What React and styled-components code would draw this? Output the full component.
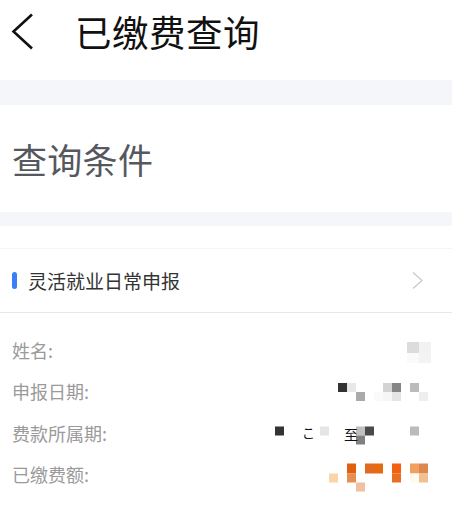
import React from "react";
import styled, { createGlobalStyle } from "styled-components";

const Global = createGlobalStyle`
  html, body { margin: 0; padding: 0; background: #ffffff; }
  body { font-family: "Noto Sans CJK SC", "Noto Sans", sans-serif; }
`;

const Page = styled.div`
  width: 452px;
  display: flex;
  flex-direction: column;
  background: #fff;
`;

const Header = styled.header`
  height: 80px;
  display: flex;
  align-items: flex-start;
  padding: 12px 0 0 11px;
  box-sizing: border-box;
  gap: 40px;
`;

const Title = styled.h1`
  margin: 0;
  font-size: 36.5px;
  line-height: 40px;
  font-weight: 400;
  color: #111;
  letter-spacing: 0.5px;
`;

const Band = styled.div`
  height: ${(p) => p.$h}px;
  background: #f5f6f9;
`;

const Section = styled.div`
  height: 107px;
  display: flex;
  align-items: center;
  padding-left: 12px;
  font-size: 35px;
  color: #55585e;
  letter-spacing: 0.3px;
`;

const Card = styled.div`
  margin-top: 22px;
  border-top: 1px solid #f4f4f4;
`;

const TypeRow = styled.div`
  height: 63px;
  display: flex;
  align-items: center;
  padding: 0 28px 0 12px;
  border-bottom: 1px solid #e8e8e8;
`;

const Mark = styled.span`
  width: 5px;
  height: 17px;
  border-radius: 3px;
  background: #3a7ff6;
  margin-right: 11px;
`;

const TypeText = styled.span`
  flex: 1;
  font-size: 19px;
  color: #333;
`;

const List = styled.div`
  padding-top: 16px;
  display: flex;
  flex-direction: column;
`;

const InfoRow = styled.div`
  height: 41.5px;
  display: flex;
  align-items: center;
  padding: 0 20px 0 12px;
`;

const Label = styled.span`
  flex: 1;
  font-size: 18px;
  color: #9a9a9a;
`;

const Mosaic = styled.svg`
  display: block;
  flex: none;
`;

const X0 = 262;

function Value({ cells, texts = [] }) {
  return (
    <Mosaic width={170} height={41.5} viewBox="0 0 170 41.5">
      {cells.map(([x, y, w, h, c], i) => (
        <rect key={i} x={x - X0} y={y} width={w} height={h} fill={c} />
      ))}
      {texts.map(([x, y, s, t], i) => (
        <text
          key={"t" + i}
          x={x - X0}
          y={y}
          fontSize={s}
          fill="#111"
          fontFamily='"Noto Sans CJK SC", sans-serif'
        >
          {t}
        </text>
      ))}
    </Mosaic>
  );
}

const rows = [
  {
    label: "姓名:",
    cells: [
      [407, 13, 12, 11, "#dcdcdc"],
      [419, 13, 12, 11, "#f2f2f2"],
      [407, 24, 12, 10, "#fafafa"],
      [419, 24, 12, 10, "#f3f3f3"],
    ],
  },
  {
    label: "申报日期:",
    cells: [
      [338, 12, 9, 9, "#333333"],
      [347, 12, 9, 9, "#e8e8e8"],
      [356, 21, 9, 9, "#aaaaaa"],
      [374, 21, 9, 9, "#fafafa"],
      [383, 12, 9, 9, "#d3d3d3"],
      [392, 12, 9, 9, "#858585"],
      [383, 21, 9, 9, "#f6f6f6"],
      [392, 21, 9, 9, "#e4e4e4"],
      [410, 12, 9, 9, "#bbbbbb"],
      [419, 21, 9, 9, "#eeeeee"],
    ],
  },
  {
    label: "费款所属期:",
    cells: [
      [275, 14.5, 9, 9, "#333333"],
      [320, 14.5, 9, 9, "#e5e5e5"],
      [356, 14.5, 9, 9, "#c0c0c0"],
      [365, 14.5, 9, 9, "#4a4a4a"],
      [356, 23.5, 9, 9, "#808080"],
      [410, 14.5, 9, 9, "#bbbbbb"],
    ],
    texts: [
      [302, 26, 13, "こ"],
      [344, 28, 14, "至"],
    ],
  },
  {
    label: "已缴费额:",
    cells: [
      [347, 9.5, 9, 10, "#e06010"],
      [365, 9.5, 9, 10, "#e06a20"],
      [374, 9.5, 9, 10, "#e66a12"],
      [392, 9.5, 9, 10, "#f56010"],
      [410, 9.5, 9, 10, "#f0a060"],
      [419, 9.5, 9, 10, "#dc8650"],
      [329, 19.5, 9, 9, "#fad5aa"],
      [347, 19.5, 9, 9, "#e49050"],
      [392, 19.5, 9, 9, "#e87025"],
      [410, 19.5, 9, 9, "#fffaf0"],
      [419, 19.5, 9, 9, "#f0c090"],
      [356, 28.5, 9, 9, "#f0c0a0"],
    ],
  },
];

export default function App() {
  return (
    <Page>
      <Global />
      <Header>
        <svg width="24" height="40" viewBox="0 0 24 40">
          <polyline
            points="21,2.5 2.5,19.5 21,36.5"
            fill="none"
            stroke="#111"
            strokeWidth="2.6"
          />
        </svg>
        <Title>已缴费查询</Title>
      </Header>
      <Band $h={25} />
      <Section>查询条件</Section>
      <Band $h={14} />
      <Card>
        <TypeRow>
          <Mark />
          <TypeText>灵活就业日常申报</TypeText>
          <svg width="12" height="20" viewBox="0 0 12 20">
            <polyline
              points="1,1.5 10,9.5 1,17.5"
              fill="none"
              stroke="#c8c8c8"
              strokeWidth="1.2"
            />
          </svg>
        </TypeRow>
        <List>
          {rows.map((r) => (
            <InfoRow key={r.label}>
              <Label>{r.label}</Label>
              <Value cells={r.cells} texts={r.texts} />
            </InfoRow>
          ))}
        </List>
      </Card>
    </Page>
  );
}
